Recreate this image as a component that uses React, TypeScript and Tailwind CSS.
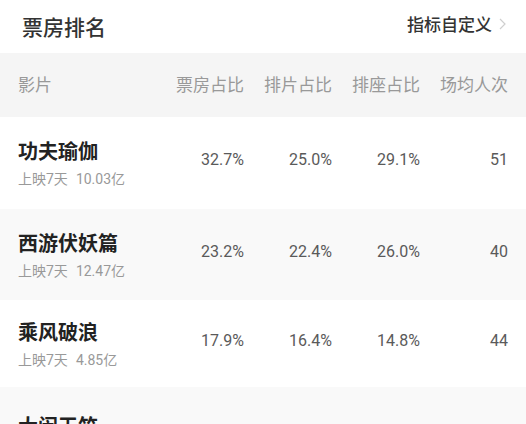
const rows = [
  { name: '功夫瑜伽', days: '上映7天', total: '10.03亿', box: '32.7%', show: '25.0%', seat: '29.1%', avg: '51', h: 'h-[92px]' },
  { name: '西游伏妖篇', days: '上映7天', total: '12.47亿', box: '23.2%', show: '22.4%', seat: '26.0%', avg: '40', h: 'h-[91px]' },
  { name: '乘风破浪', days: '上映7天', total: '4.85亿', box: '17.9%', show: '16.4%', seat: '14.8%', avg: '44', h: 'h-[87px]' },
  { name: '大闹天竺', days: '上映7天', total: '3.12亿', box: '9.6%', show: '12.1%', seat: '10.5%', avg: '30', h: 'h-[102px]' },
];

const cols = ['票房占比', '排片占比', '排座占比', '场均人次'];

const App = () => {
  return (
    <div className="w-[526px] h-[424px] overflow-hidden bg-white font-['Roboto','Noto_Sans_CJK_SC',sans-serif]">
      {/* top bar */}
      <div className="h-[53px] flex items-center justify-between pl-[22px] pr-[20px]">
        <span className="text-[21px] font-medium text-[#333] font-['Noto_Sans_CJK_SC',sans-serif]">票房排名</span>
        <span className="flex items-center gap-[7px] -mt-[5px]">
          <span className="text-[17px] font-medium text-[#333] font-['Noto_Sans_CJK_SC',sans-serif]">指标自定义</span>
          <svg width="7" height="12" viewBox="0 0 7 12" fill="none">
            <path d="M1 1l5 5-5 5" stroke="#cfcfcf" strokeWidth="1.2" />
          </svg>
        </span>
      </div>

      {/* table header */}
      <div className="h-[64px] bg-[#f5f5f5] flex items-center pl-[18px] pr-[18px] pb-[2px] text-[17px] text-[#999] font-['Noto_Sans_CJK_SC',sans-serif]">
        <span className="flex-1">影片</span>
        {cols.map((c) => (
          <span key={c} className="w-[88px] text-right">{c}</span>
        ))}
      </div>

      {rows.map((r, i) => (
        <div
          key={r.name}
          className={`${r.h} flex items-center pl-[18px] pr-[18px] ${i % 2 === 1 ? 'bg-[#f9f9f9]' : 'bg-white'}`}
        >
          <div className="flex-1 flex flex-col">
            <span className="text-[20px] leading-[28px] font-bold text-[#222] font-['Noto_Sans_CJK_SC',sans-serif]">{r.name}</span>
            <span className="mt-[4px] text-[14px] leading-[20px] text-[#999]">
              {r.days}
              <span className="ml-[8px]">{r.total}</span>
            </span>
          </div>
          {[r.box, r.show, r.seat, r.avg].map((v, j) => (
            <span key={j} className="w-[88px] text-right text-[16px] text-[#5a5a5a] -mt-[6px]">{v}</span>
          ))}
        </div>
      ))}
    </div>
  );
};

export default App;
